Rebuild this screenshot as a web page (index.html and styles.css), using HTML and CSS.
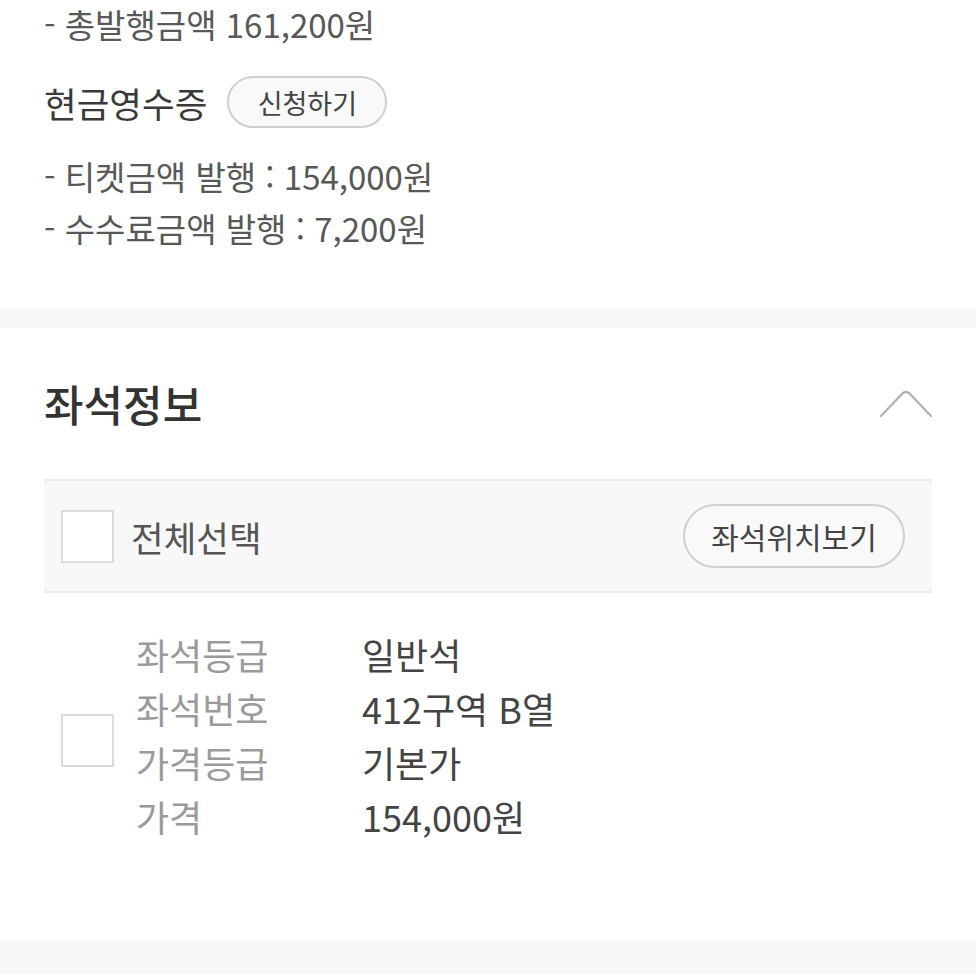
FILE: index.html
```html
<!DOCTYPE html>
<html lang="ko">
<head>
<meta charset="utf-8">
<link rel="stylesheet" href="styles.css">
</head>
<body>
<section class="receipt">
  <p class="line line-first">- 총발행금액 161,200원</p>
  <div class="cash-row">
    <h3 class="cash-title">현금영수증</h3>
    <button class="pill pill-small">신청하기</button>
  </div>
  <div class="cash-lines">
    <p class="line">- 티켓금액 발행 : 154,000원</p>
    <p class="line">- 수수료금액 발행 : 7,200원</p>
  </div>
</section>
<div class="band"></div>
<section class="seat">
  <div class="seat-head">
    <h2 class="seat-title">좌석정보</h2>
    <svg class="chevron" width="54" height="30" viewBox="0 0 54 30"><path d="M2 28 L23 6 Q27 2 31 6 L52 28" fill="none" stroke="#b0b0b0" stroke-width="2.2" stroke-linecap="round" stroke-linejoin="round"/></svg>
  </div>
  <div class="table-head">
    <span class="check"></span>
    <span class="select-all">전체선택</span>
    <button class="pill pill-large">좌석위치보기</button>
  </div>
  <div class="seat-row">
    <span class="check check-row"></span>
    <dl class="info">
      <dt>좌석등급</dt><dd>일반석</dd>
      <dt>좌석번호</dt><dd>412구역 B열</dd>
      <dt>가격등급</dt><dd>기본가</dd>
      <dt>가격</dt><dd>154,000원</dd>
    </dl>
  </div>
</section>
<div class="band band-bottom"></div>
</body>
</html>
```
FILE: styles.css
```css
* { box-sizing: border-box; }
html, body { margin: 0; padding: 0; background: #fff; }
body {
  font-family: "Noto Sans CJK KR", "Noto Sans", sans-serif;
  color: #555;
  width: 976px;
  height: 976px;
  overflow: hidden;
}
p, h2, h3, dl, dt, dd { margin: 0; font-weight: 400; }

.receipt { padding: 0 44px 54px; }
.line { font-size: 33px; line-height: 52px; color: #585858; }
.line-first { line-height: 48px; }

.cash-row { display: flex; align-items: center; gap: 20px; margin-top: 28px; height: 52px; }
.cash-title { font-size: 35.5px; color: #3a3a3a; font-weight: 400; }
.cash-lines { margin-top: 22px; }

.pill {
  font-family: "Noto Sans CJK KR", "Noto Sans", sans-serif;
  background: #f9f9f9;
  border: 2px solid #cfcfcf;
  border-radius: 40px;
  color: #444;
  padding: 0;
  display: flex;
  align-items: center;
  justify-content: center;
}
.pill-small { width: 160px; height: 52px; font-size: 27px; }
.pill-large { width: 222px; height: 64px; font-size: 30px; margin-left: auto; }

.band { height: 20px; background: #f8f8f8; }
.band-bottom { height: 34px; }

.seat { padding: 45px 44px 0; }
.seat-head { display: flex; align-items: center; justify-content: space-between; height: 60px; }
.seat-title { font-size: 43px; color: #333; font-weight: 500; }
.chevron { display: block; margin-right: -1px; margin-top: 0; }

.table-head {
  margin-top: 46px;
  height: 114px;
  display: flex;
  align-items: center;
  background: #f8f8f8;
  border-top: 2px solid #ebebeb;
  border-bottom: 2px solid #ebebeb;
  padding: 0 27px 0 17px;
}
.check {
  width: 53px; height: 53px;
  background: #fff;
  border: 2px solid #dcdcdc;
  flex: none;
}
.select-all { margin-left: 17px; font-size: 35.5px; color: #555; }

.seat-row { display: flex; padding: 34px 0 97px 17px; }
.check-row { margin-top: 87px; }
.info {
  display: grid;
  grid-template-columns: 226px auto;
  margin-left: 22px;
  font-size: 36px;
  line-height: 54px;
}
.info dt { color: #9a9a9a; }
.info dd { color: #444; }
```
